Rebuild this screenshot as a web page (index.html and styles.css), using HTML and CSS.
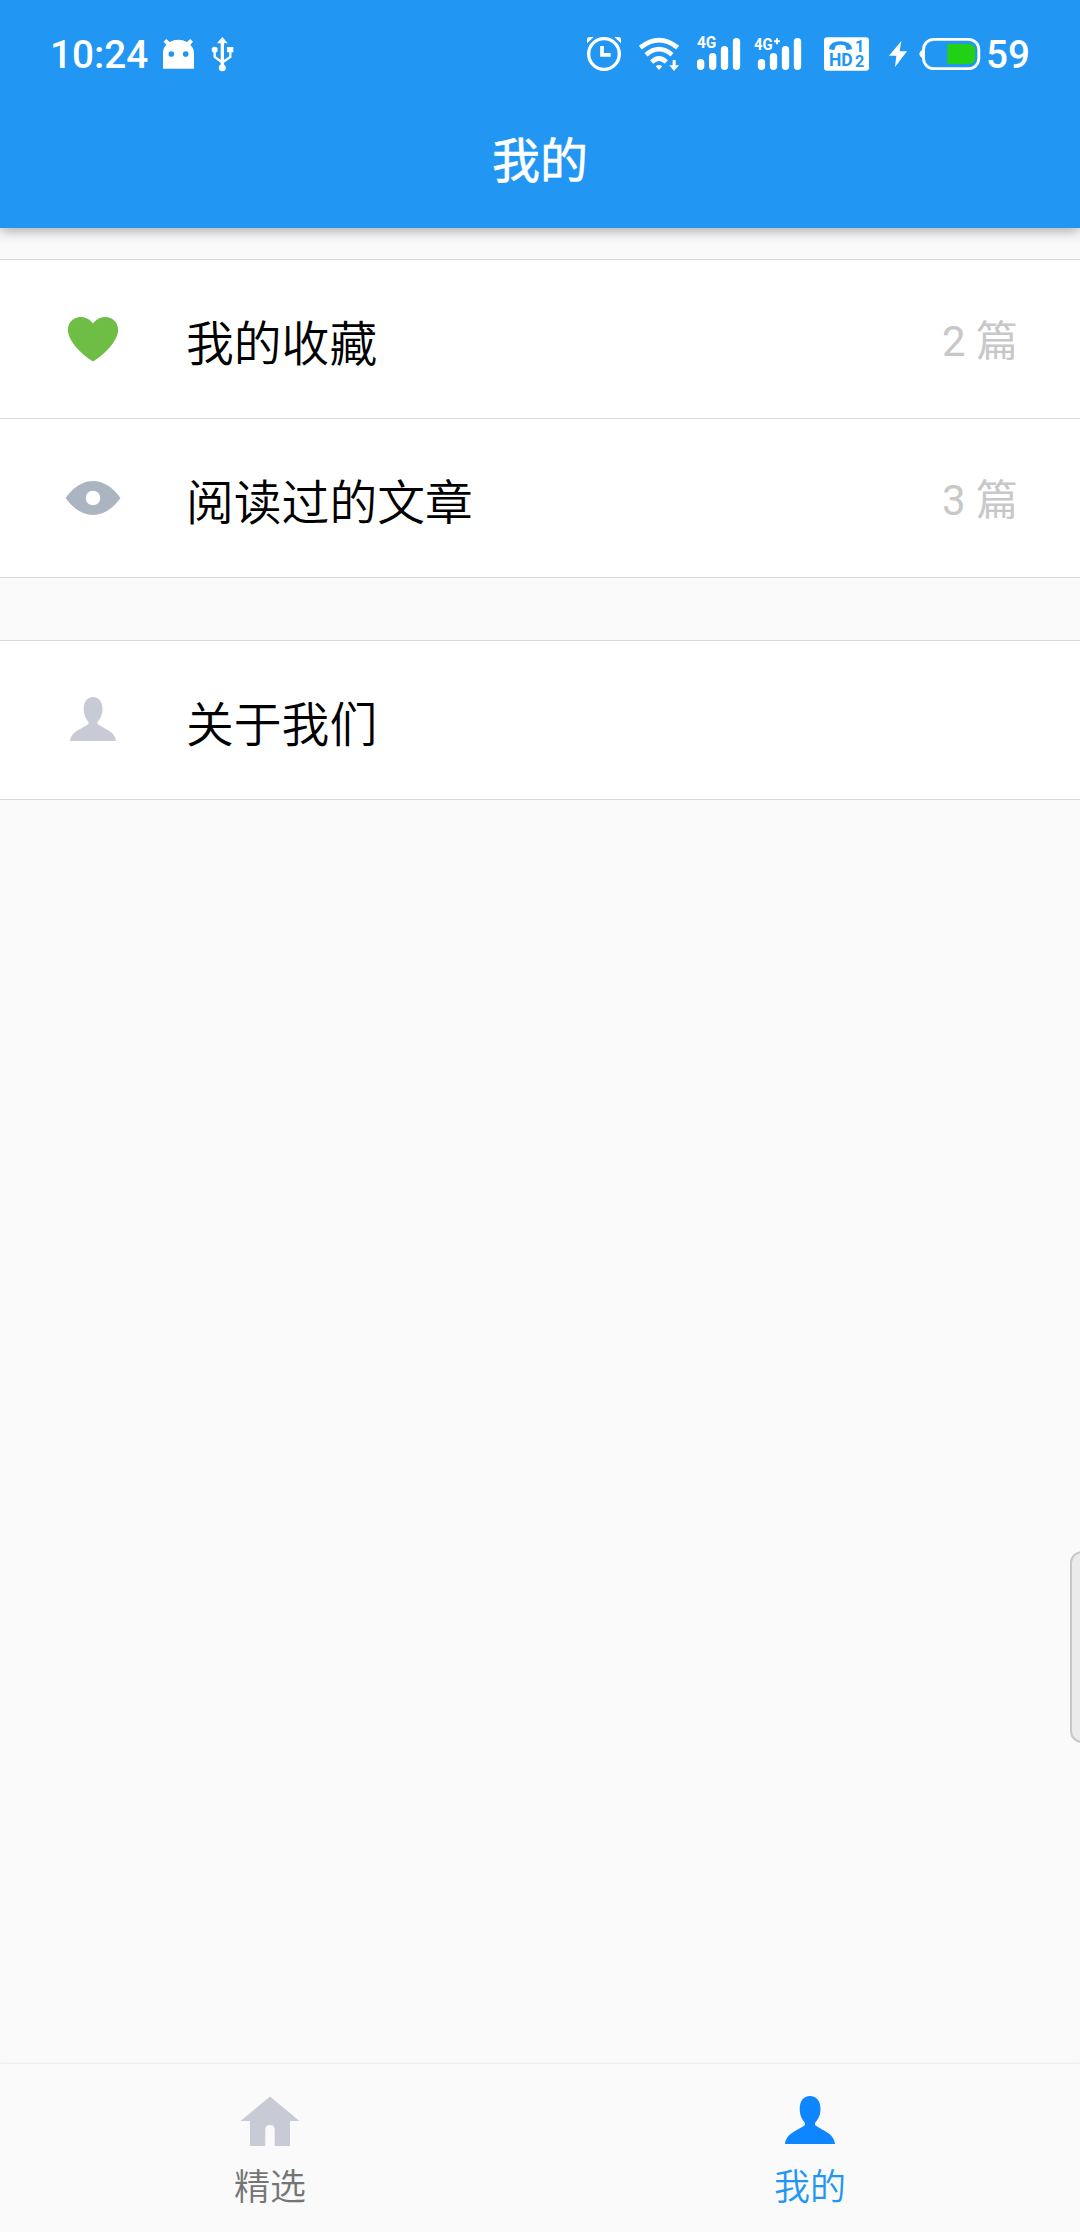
FILE: index.html
```
<!DOCTYPE html>
<html lang="zh-CN">
<head>
    <meta charset="UTF-8">
    <meta name="viewport" content="width=device-width, initial-scale=1" />
    <title>我的</title>
    <link rel="stylesheet" href="styles.css">
</head>
<body>

<div class="page">
    <header class="header">
        <div class="status">
            <span class="time">10:24</span>
            <svg class="android" width="35" height="70" viewBox="390 0 105 210">
                <path fill="#fff" d="M399 146V100Q399 82 409 75L401 65L409 57L419 66Q445 52 471 66L481 57L489 65L481 75Q492 84 492 102V146Z"/>
                <circle cx="424" cy="102" r="8.5" fill="#2196f3"/>
                <circle cx="467" cy="102" r="8.5" fill="#2196f3"/>
            </svg>
            <svg class="usb" width="25" height="70" viewBox="540 0 75 210">
                <path fill="none" stroke="#fff" stroke-width="10" d="M577 62V142"/>
                <path fill="none" stroke="#fff" stroke-width="7" d="M554 92V111L575 126M601 90V111L579 126"/>
                <path fill="#fff" d="M577 51L593 70H561ZM591 81H610V97H591Z"/>
                <circle cx="554" cy="89" r="9" fill="#fff"/>
                <circle cx="577" cy="143" r="10.500" fill="#fff"/>
            </svg>

            <svg class="alarm" width="38" height="70" viewBox="45 0 114 210">
                <circle cx="102" cy="102" r="46" fill="none" stroke="#fff" stroke-width="10"/>
                <path fill="none" stroke="#fff" stroke-width="11" d="M96 78V104.500H122"/>
                <path fill="#fff" d="M51 70V58Q52 51 61 51H71ZM153 70V58Q152 51 143 51H133Z"/>
            </svg>
            <svg class="wifi" width="44" height="70" viewBox="201 0 132 210">
                <g fill="none" stroke="#fff" stroke-width="14">
                    <path d="M211 83Q267 38 323 83"/>
                    <path d="M228 104Q267 71 306 104"/>
                    <path d="M245 126Q267 105 289 126"/>
                </g>
                <path fill="#fff" d="M267 150L257 139Q267 131 277 139ZM308 120H317V136H327L312 153L298 136H308Z"/>
            </svg>
            <svg class="signal" width="47" height="70" viewBox="375 0 141 210">
                <text class="net" x="381" y="83" textLength="58" lengthAdjust="spacingAndGlyphs">4G</text>
                <path class="bars" d="M392 128V139M428 110V139M463.500 89V139M499.500 65V139"/>
            </svg>
            <svg class="signal-plus" width="50" height="70" viewBox="549 0 150 210">
                <text class="net" x="552" y="90" textLength="56" lengthAdjust="spacingAndGlyphs">4G</text>
                <path stroke="#fff" stroke-width="6" d="M612 64H630M621 55V73"/>
                <path class="bars" d="M574.500 128V139M610.500 110V139M646.500 89V139M682.500 65V139"/>
            </svg>
            <svg class="hd" width="47" height="70" viewBox="69 0 141 210">
                <rect x="72" y="52" width="135" height="100" rx="9" fill="#fff"/>
                <path fill="#2196f3" d="M87 87Q89 64 121 64Q154 64 156 87L140 91Q137 83 136 77Q121 72 107 77Q106 84 102 91Z"/>
                <text class="hd-text" x="87" y="138" font-size="57" textLength="71" lengthAdjust="spacingAndGlyphs">HD</text>
                <text class="hd-text" x="165" y="96" font-size="47" textLength="28" lengthAdjust="spacingAndGlyphs">1</text>
                <text class="hd-text" x="165" y="140" font-size="49" textLength="28" lengthAdjust="spacingAndGlyphs">2</text>
            </svg>
            <svg class="bolt" width="20" height="70" viewBox="264 0 60 210">
                <path fill="#fff" d="M304 63L267 107H289L285 141L321 94H299Z"/>
            </svg>
            <svg class="battery" width="63" height="70" viewBox="354 0 189 210">
                <rect x="370.500" y="58" width="166" height="88" rx="31" fill="none" stroke="#fff" stroke-width="8.500"/>
                <path fill="#fff" d="M371 87Q358 94 358 102Q358 110 371 117Z"/>
                <path fill="#22d016" d="M442 72H506Q526 72 526 94V110Q526 132 506 132H442Z"/>
            </svg>
            <span class="level">59</span>
        </div>
        <h1 class="title">我的</h1>
    </header>

    <main class="content">
        <ul class="list">
            <li class="item">
                <svg class="icon" width="66" height="66" viewBox="0 0 66 66">
                    <path fill="#6ebe46" d="M33 13.500C28 6.500 20 5.500 14.500 8.500C9 11.500 7.500 17 8 22C9.500 32 21 44 33 51.500C45 44 56.500 32 58 22C58.500 17 57 11.500 51.500 8.500C46 5.500 38 6.500 33 13.500Z"/>
                </svg>
                <span class="label">我的收藏</span>
                <span class="count">2 篇</span>
            </li>
            <li class="item">
                <svg class="icon" width="66" height="66" viewBox="0 0 66 66">
                    <path fill="#abb4c1" fill-rule="evenodd" d="M5.500 29Q18 12 33 12Q48 12 60.500 29Q48 46 33 46Q18 46 5.500 29ZM33 21.700A7.300 7.300 0 1 0 33 36.300A7.300 7.300 0 1 0 33 21.700Z"/>
                </svg>
                <span class="label">阅读过的文章</span>
                <span class="count">3 篇</span>
            </li>
        </ul>
        <ul class="list">
            <li class="item">
                <svg class="icon" width="66" height="66" viewBox="0 0 66 66">
                    <path fill="#c8cbd5" d="M33 6C27 6 23.700 11 23.700 18C23.700 24 26 28 28.500 31V33C22 38 11 40 10 50H56C55 40 44 38 37.500 33V31C40 28 42.500 24 42.500 18C42.500 11 39 6 33 6Z"/>
                </svg>
                <span class="label">关于我们</span>
            </li>
        </ul>
    </main>

    <nav class="tabs">
        <a class="tab">
            <svg class="tab-icon" width="66" height="66" viewBox="0 0 66 66">
                <path fill="#c8cbd5" d="M33 4.500L62.500 29H53V54H37.700V38Q37.700 33 33 33Q28.300 33 28.300 38V54H13V29H3.500Z"/>
            </svg>
            <span>精选</span>
        </a>
        <a class="tab active">
            <svg class="tab-icon" width="66" height="66" viewBox="0 0 66 66">
                <path fill="#0d86ff" d="M33 4C26.500 4 22.700 9 22.700 17C22.700 24 25.500 28 28 31V33C21 38.500 9 41 8 52H58C57 41 45 38.500 38 33V31C40.500 28 43.500 24 43.500 17C43.500 9 39.500 4 33 4Z"/>
            </svg>
            <span>我的</span>
        </a>
    </nav>

    <div class="edge-handle"></div>
</div>

</body>
</html>
```

FILE: styles.css
```
* {
    box-sizing: border-box;
}

body {
    margin: 0;
    font-family: Roboto, "Noto Sans CJK SC", sans-serif;
    background-color: #fafafa;
}

.page {
    position: relative;
    display: flex;
    flex-direction: column;
    height: 2232px;
    overflow: hidden;
}

.header {
    height: 228px;
    padding-top: 20px;
    color: #fff;
    background-color: #2196f3;
    box-shadow: 0 3px 12px rgba(0, 0, 0, .33);
}

.status {
    display: flex;
    height: 70px;
    padding: 0 48px 0 50px;
    font-size: 38.700px;
    font-weight: 500;
    line-height: 70px;
}

.status svg {
    flex: none;
}

.time {
    width: 110px;
}

.usb {
    margin-left: 15px;
}

.alarm {
    margin-left: auto;
}

.wifi, .signal {
    margin-left: 14px;
}

.signal-plus {
    margin-left: 11px;
}

.hd {
    margin-left: 20px;
}

.bolt {
    margin-left: 18px;
}

.battery {
    margin-left: 10px;
}

.level {
    width: 46px;
    margin-left: 5px;
}

.net {
    font-size: 49px;
    font-weight: 700;
    fill: #fff;
}

.bars {
    stroke: #fff;
    stroke-width: 22px;
    stroke-linecap: round;
}

.hd-text {
    font-weight: 700;
    fill: #2196f3;
}

.title {
    margin: 37px 0 0;
    font-size: 48px;
    font-weight: 400;
    line-height: 70px;
    text-align: center;
    -webkit-text-stroke: .6px #fff;
}

.content {
    flex: 1;
    padding-top: 31px;
}

.list {
    margin: 0 0 62px;
    padding: 0;
    list-style: none;
    background-color: #fff;
    border-bottom: 1px solid #d9d9d9;
}

.item {
    display: flex;
    align-items: center;
    height: 159px;
    padding: 0 62px 0 60px;
    border-top: 1px solid #d9d9d9;
}

.icon {
    margin-top: 7px;
}

.label {
    margin: 2px 0 0 60px;
    font-size: 47.800px;
    font-weight: 350;
    color: #000;
}

.count {
    margin: -3px 0 0 auto;
    font-size: 42px;
    color: #c8c8c8;
}

.tabs {
    display: flex;
    height: 168px;
    background-color: #fafafa;
    box-shadow: 0 -1px 2px rgba(0, 0, 0, .07);
}

.tab {
    display: flex;
    flex: 1;
    flex-direction: column;
    align-items: center;
    padding-top: 28px;
    font-size: 36px;
    font-weight: 350;
    line-height: 60px;
    color: #757575;
}

.tab.active {
    color: #2196f3;
}

/* floating drawer handle, half off the right edge */
.edge-handle {
    position: absolute;
    top: 1551px;
    right: -14px;
    width: 24px;
    height: 192px;
    background-color: #ebebeb;
    border: 2px solid #c8c8c8;
    border-radius: 12px;
}
```
